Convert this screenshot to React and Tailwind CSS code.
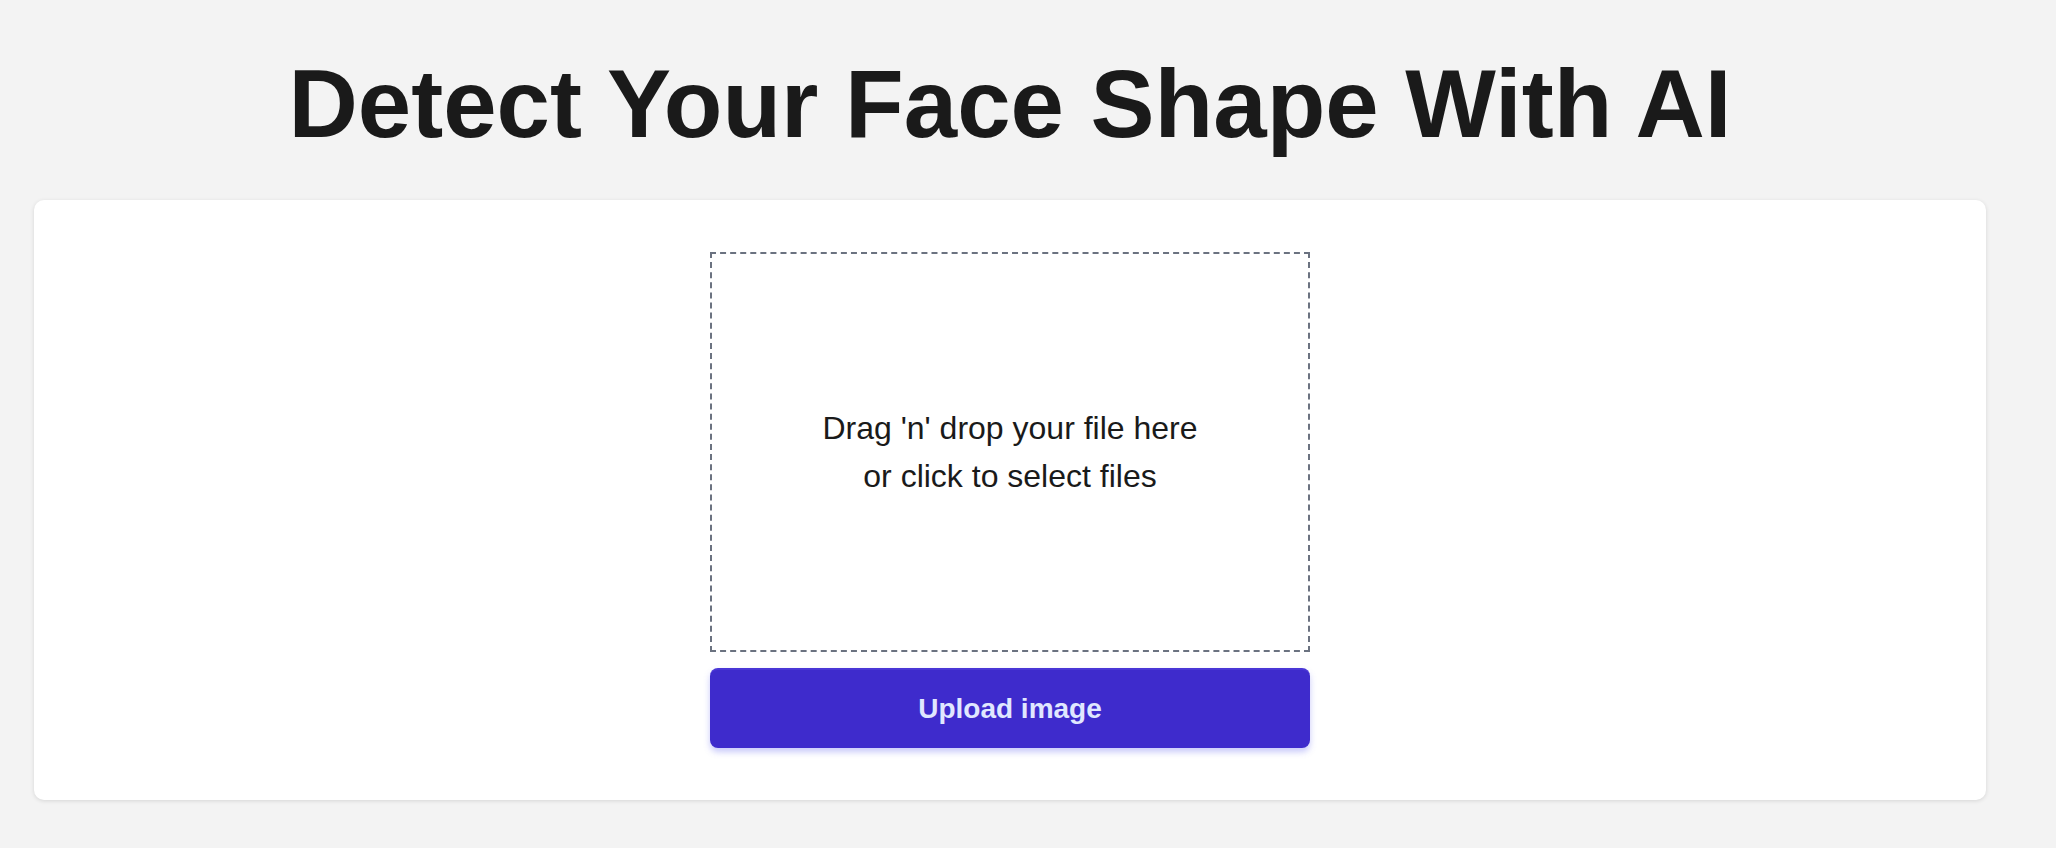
import React from "react";

export default function App() {
  return (
    <div
      className="min-h-screen w-full bg-[#f3f3f3]"
      style={{ fontFamily: '"Liberation Sans", Arial, Helvetica, sans-serif' }}
    >
      <div className="ml-[34px] w-[1952px] pt-[56px]">
        <h1 className="text-center text-[96px] font-bold leading-[96px] text-[#1a1a1a]">
          Detect Your Face Shape With AI
        </h1>
        <div className="mt-[48px] flex flex-col items-center rounded-[10px] bg-white py-[52px] shadow-[0_1px_4px_rgba(0,0,0,0.12)]">
          <div className="flex h-[400px] w-[600px] cursor-pointer items-center justify-center border-2 border-dashed border-[#6b7280] bg-white">
            <p className="text-center text-[32px] leading-[48px] text-[#1a1a1a]">
              Drag &apos;n&apos; drop your file here
              <br />
              or click to select files
            </p>
          </div>
          <button className="mt-[16px] flex h-[80px] w-[600px] items-center justify-center rounded-lg border-t-2 border-[#4a37d6] bg-[#3e2bcc] text-[28px] font-bold text-[#e0e7ff] shadow-[0_4px_6px_rgba(99,102,241,0.35)]">
            Upload image
          </button>
        </div>
      </div>
    </div>
  );
}
